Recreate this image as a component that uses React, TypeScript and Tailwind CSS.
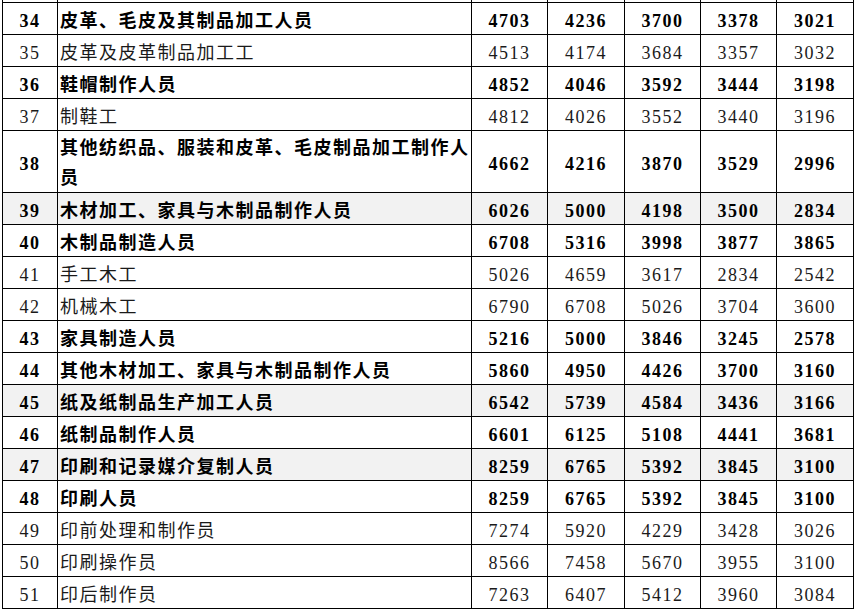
const COLS = "grid grid-rows-1 grid-cols-[55px_414px_76px_77px_76px_76px_77px]";

type Row = {
  no: string;
  name: string;
  vals: string[];
  bold?: boolean;
  shade?: boolean;
  tall?: boolean;
};

const ROWS: Row[] = [
  { no: "34", name: "皮革、毛皮及其制品加工人员", vals: ["4703", "4236", "3700", "3378", "3021"], bold: true },
  { no: "35", name: "皮革及皮革制品加工工", vals: ["4513", "4174", "3684", "3357", "3032"] },
  { no: "36", name: "鞋帽制作人员", vals: ["4852", "4046", "3592", "3444", "3198"], bold: true },
  { no: "37", name: "制鞋工", vals: ["4812", "4026", "3552", "3440", "3196"] },
  { no: "38", name: "其他纺织品、服装和皮革、毛皮制品加工制作人员", vals: ["4662", "4216", "3870", "3529", "2996"], bold: true, tall: true },
  { no: "39", name: "木材加工、家具与木制品制作人员", vals: ["6026", "5000", "4198", "3500", "2834"], bold: true, shade: true },
  { no: "40", name: "木制品制造人员", vals: ["6708", "5316", "3998", "3877", "3865"], bold: true },
  { no: "41", name: "手工木工", vals: ["5026", "4659", "3617", "2834", "2542"] },
  { no: "42", name: "机械木工", vals: ["6790", "6708", "5026", "3704", "3600"] },
  { no: "43", name: "家具制造人员", vals: ["5216", "5000", "3846", "3245", "2578"], bold: true },
  { no: "44", name: "其他木材加工、家具与木制品制作人员", vals: ["5860", "4950", "4426", "3700", "3160"], bold: true },
  { no: "45", name: "纸及纸制品生产加工人员", vals: ["6542", "5739", "4584", "3436", "3166"], bold: true, shade: true },
  { no: "46", name: "纸制品制作人员", vals: ["6601", "6125", "5108", "4441", "3681"], bold: true },
  { no: "47", name: "印刷和记录媒介复制人员", vals: ["8259", "6765", "5392", "3845", "3100"], bold: true, shade: true },
  { no: "48", name: "印刷人员", vals: ["8259", "6765", "5392", "3845", "3100"], bold: true },
  { no: "49", name: "印前处理和制作员", vals: ["7274", "5920", "4229", "3428", "3026"] },
  { no: "50", name: "印刷操作员", vals: ["8566", "7458", "5670", "3955", "3100"] },
  { no: "51", name: "印后制作员", vals: ["7263", "6407", "5412", "3960", "3084"] },
];

function TableRow({ row }: { row: Row }) {
  const tone = row.bold ? "font-bold text-black" : "font-normal text-[#1a1a1a]";
  const bg = row.shade ? "bg-[#f2f2f2]" : "bg-white";
  const h = row.tall ? "h-[62px]" : "h-[32px]";
  const nameLead = row.tall ? "leading-[30px] pt-[3px]" : "leading-[26px] pt-[4px]";
  return (
    <div className={`${COLS} ${h} ${bg} ${tone}`}>
      <div className="flex items-center justify-center border-r border-b border-black pt-[4px] leading-[26px]">
        {row.no}
      </div>
      <div className={`flex items-center border-r border-b border-black pl-[2px] ${nameLead}`}>
        <span>{row.name}</span>
      </div>
      {row.vals.map((v, i) => (
        <div
          key={i}
          className="flex items-center justify-center border-r border-b border-black pt-[4px] leading-[26px]"
        >
          {v}
        </div>
      ))}
    </div>
  );
}

export default function App() {
  return (
    <div className="h-[613px] w-[857px] overflow-hidden bg-white">
      <div
        className="ml-[2px] -mt-[29px] w-fit border-l border-black text-[18px] tracking-[1.5px]"
        style={{ fontFamily: '"Liberation Serif", "Noto Sans CJK SC", serif' }}
      >
        {/* row 33, cut off at the top edge */}
        <div className={`${COLS} h-[32px]`}>
          {Array.from({ length: 7 }).map((_, i) => (
            <div key={i} className="border-r border-b border-black" />
          ))}
        </div>
        {ROWS.map((r) => (
          <TableRow key={r.no} row={r} />
        ))}
      </div>
    </div>
  );
}
